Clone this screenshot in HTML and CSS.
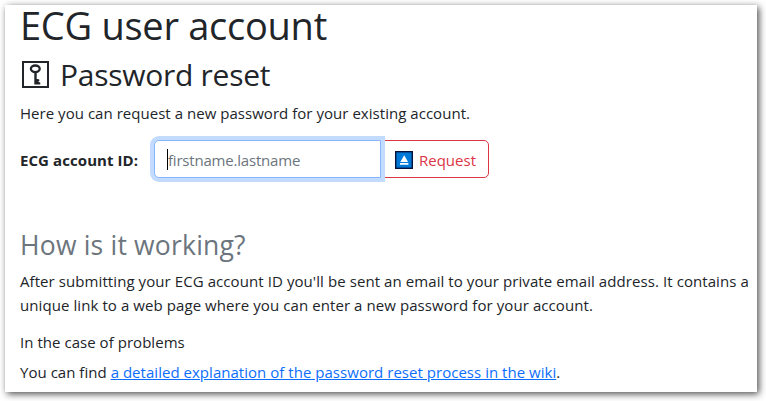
FILE: index.html
```
<!DOCTYPE html>
<html lang="en">
<head>
    <meta charset="UTF-8">
    <meta name="viewport" content="width=device-width, initial-scale=1.0">
    <title>ECG user account</title>
    <link rel="stylesheet" href="styles.css">
</head>
<body>

    <main class="page">
        <h1>ECG user account</h1>
        <h2>
            <svg class="key-icon" viewBox="0 0 27 27">
                <rect x="1" y="1" width="25" height="25" fill="none" stroke="currentColor" stroke-width="2"/>
                <ellipse cx="13.3" cy="7.8" rx="4.4" ry="3.3" fill="none" stroke="currentColor" stroke-width="2.3"/>
                <path d="M12.3 10.5h2.4v13h-2.4zM14.5 17.7l2.8.9v1.3l-1.2.6 2.2 1.2v1.8h-4z" fill="currentColor"/>
            </svg>
            <span>Password reset</span>
        </h2>
        <p class="intro">Here you can request a new password for your existing account.</p>

        <form class="request">
            <label for="account">ECG account ID:</label>
            <div class="field">
                <input type="text" id="account" placeholder="firstname.lastname">
                <span class="caret"></span>
            </div>
            <button type="button">
                <svg class="eject-icon" viewBox="0 0 18 18">
                    <rect x="0.7" y="0.7" width="16.6" height="16.6" fill="#0078d7" stroke="#06123a" stroke-width="1.4"/>
                    <path d="M9.2 4.3l3.9 6.7H5.3zM5 12h8.4v1.8H5z" fill="#fff"/>
                </svg>
                <span>Request</span>
            </button>
        </form>

        <h3>How is it working?</h3>
        <p class="how">
            After submitting your ECG account ID you'll be sent an email to your private email address. It contains a<br>
            unique link to a web page where you can enter a new password for your account.
        </p>
        <h6>In the case of problems</h6>
        <p class="wiki">You can find <a href="#">a detailed explanation of the password reset process in the wiki</a>.</p>
    </main>

</body>
</html>
```
FILE: styles.css
```
* {
    box-sizing: border-box;
}

body {
    margin: 0;
    padding: 5px;
    height: 401px;
    overflow: hidden;
    background-color: #fff;
    color: #212529;
    font-family: "Segoe UI", "Open Sans", "Noto Sans", sans-serif;
    font-size: 15px;
    line-height: 24px;
}

.page {
    display: flex;
    flex-direction: column;
    width: 752px;
    height: 387px;
    padding: 0 0 0 15px;
    background-color: #fff;
    box-shadow: 2px 2px 7px rgba(0, 0, 0, 0.7);
    white-space: nowrap;
}

h1, h2, h3, h6, p {
    margin: 0;
    font-weight: 400;
}

h1 {
    margin-top: -4px;
    height: 53px;
    font-size: 38px;
    line-height: 48px;
    letter-spacing: -0.27px;
}

h2 {
    display: flex;
    align-items: center;
    gap: 11px;
    height: 47px;
    padding-bottom: 6px;
    font-size: 30px;
    line-height: 38px;
    letter-spacing: -0.27px;
}

.key-icon {
    width: 27px;
    height: 27px;
    margin-left: 2px;
}

.intro {
    margin-bottom: 15px;
    letter-spacing: 0.035px;
}

.request {
    display: flex;
    align-items: center;
    height: 38px;
    margin-bottom: 50px;
}

label {
    width: 134px;
    padding-top: 1px;
    font-weight: 700;
    letter-spacing: 0.08px;
}

.field {
    position: relative;
    z-index: 1;
}

input {
    display: block;
    width: 227px;
    height: 38px;
    padding: 7px 12px 5px 13px;
    border: 1px solid #86b7fe;
    border-radius: 5px 0 0 5px;
    outline: none;
    box-shadow: 0 0 0 4px #c2dbff;
    font: inherit;
    letter-spacing: -0.2px;
}

input::placeholder {
    color: #6c757d;
}

/* text cursor of the focused field */
.caret {
    position: absolute;
    left: 13px;
    top: 9px;
    width: 1px;
    height: 21px;
    background-color: #000;
}

button {
    display: flex;
    align-items: center;
    gap: 6px;
    width: 109px;
    height: 38px;
    margin-left: -1px;
    padding: 1px 0 0 14px;
    border: 1px solid #dc3545;
    border-radius: 0 5px 5px 0;
    background-color: #fff;
    color: #dc3545;
    font: inherit;
}

.eject-icon {
    width: 18px;
    height: 18px;
}

h3 {
    height: 41px;
    color: #6c757d;
    font-size: 26.5px;
    line-height: 34px;
    letter-spacing: 0.2px;
}

.how {
    margin-bottom: 13px;
    letter-spacing: 0.08px;
}

h6 {
    margin-bottom: 6px;
    font-size: 15px;
    line-height: 24px;
    letter-spacing: 0.04px;
}

.wiki {
    letter-spacing: 0.03px;
}

a {
    color: #0d6efd;
}
```
